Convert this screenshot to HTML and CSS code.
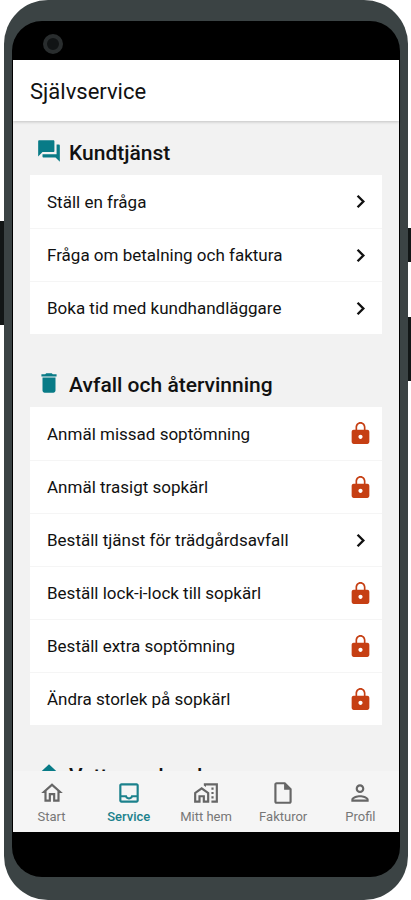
FILE: index.html
```html
<!DOCTYPE html>
<html lang="sv">
<head>
<meta charset="utf-8">
<meta name="viewport" content="width=device-width, initial-scale=1">
<title>Självservice</title>
<link rel="stylesheet" href="styles.css">
</head>
<body>
<svg class="defs" aria-hidden="true">
  <symbol id="chevron" viewBox="0 0 24 24"><path d="M9.200 6.500 14.700 12l-5.500 5.500" fill="none" stroke="currentColor" stroke-width="2.300"/></symbol>
  <symbol id="lock" viewBox="0 0 24 24"><path d="M18.500 8.500h-1.700V6c0-2.760-2.100-5-4.800-5S7.200 3.240 7.200 6v2.500H5.500c-1.100 0-2 .9-2 2V20c0 1.100.9 2 2 2h13c1.100 0 2-.9 2-2v-9.500c0-1.100-.9-2-2-2zM12 17.200c-1.100 0-2-.9-2-2s.9-2 2-2 2 .9 2 2-.9 2-2 2zm3.200-8.700H8.800V6c0-1.900 1.400-3.400 3.200-3.400s3.200 1.500 3.200 3.400v2.500z"/></symbol>
</svg>
<div class="phone">
  <span class="key key-left"></span>
  <span class="key key-power"></span>
  <span class="key key-volume"></span>
  <div class="bezel">
    <div class="camera-bar"><span class="camera"></span></div>
    <div class="screen">
      <header class="app-bar"><h1>Självservice</h1></header>
      <main class="content">
        <section class="group">
          <h2><svg viewBox="0 0 24 24" aria-hidden="true"><path d="M21 6h-2v9H6v2c0 .55.45 1 1 1h11l4 4V7c0-.55-.45-1-1-1zm-4 6V3c0-.55-.45-1-1-1H3c-.55 0-1 .45-1 1v14l4-4h10c.55 0 1-.45 1-1z"/></svg>Kundtjänst</h2>
          <ul class="card">
            <li><a href="#">Ställ en fråga<svg class="go"><use href="#chevron"/></svg></a></li>
            <li><a href="#">Fråga om betalning och faktura<svg class="go"><use href="#chevron"/></svg></a></li>
            <li><a href="#">Boka tid med kundhandläggare<svg class="go"><use href="#chevron"/></svg></a></li>
          </ul>
        </section>
        <section class="group">
          <h2><svg viewBox="0 0 24 24" aria-hidden="true"><path d="M6 19c0 1.100.9 2 2 2h8c1.100 0 2-.9 2-2V7H6v12zM19 4h-3.500l-1-1h-5l-1 1H5v2h14V4z"/></svg>Avfall och återvinning</h2>
          <ul class="card">
            <li><a href="#">Anmäl missad soptömning<svg class="lock"><use href="#lock"/></svg></a></li>
            <li><a href="#">Anmäl trasigt sopkärl<svg class="lock"><use href="#lock"/></svg></a></li>
            <li><a href="#">Beställ tjänst för trädgårdsavfall<svg class="go"><use href="#chevron"/></svg></a></li>
            <li><a href="#">Beställ lock-i-lock till sopkärl<svg class="lock"><use href="#lock"/></svg></a></li>
            <li><a href="#">Beställ extra soptömning<svg class="lock"><use href="#lock"/></svg></a></li>
            <li><a href="#">Ändra storlek på sopkärl<svg class="lock"><use href="#lock"/></svg></a></li>
          </ul>
        </section>
        <section class="group">
          <h2><svg viewBox="0 0 24 24" aria-hidden="true"><path d="M12 3 4 10.500h3V20h10v-9.500h3z"/></svg>Vatten och avlopp</h2>
        </section>
      </main>
      <nav class="tabs">
        <a href="#"><svg viewBox="0 0 24 24"><path d="m12 5.690 5 4.500V18h-2v-6H9v6H7v-7.810l5-4.500M12 3 2 12h3v8h6v-6h2v6h6v-8h3L12 3z"/></svg>Start</a>
        <a href="#" class="active" aria-current="page"><svg viewBox="0 0 24 24"><path d="M19 3H5c-1.100 0-2 .9-2 2v14c0 1.100.9 2 2 2h14c1.100 0 2-.9 2-2V5c0-1.100-.9-2-2-2zm0 16H5v-3h3.560c.69 1.190 1.970 2 3.450 2s2.750-.81 3.450-2H19v3zm0-5h-4.990c0 1.100-.9 2-2 2s-2-.9-2-2H5V5h14v9z"/></svg>Service</a>
        <a href="#"><svg viewBox="0 0 24 24"><path d="M1 11.500V21h6v-5h2v5h6v-9.500L8 6.500l-7 5zM13 19h-2v-5H5v5H3v-6.460l5-3.570 5 3.570V19z"/><path d="M17 7h2v2h-2zM17 11h2v2h-2zM17 15h2v2h-2z"/><path d="M10 3v1.970l2 1.430V5h9v14h-4v2h6V3z"/></svg>Mitt hem</a>
        <a href="#"><svg viewBox="0 0 24 24"><path d="M14 2H6c-1.100 0-2 .9-2 2v16c0 1.100.9 2 2 2h12c1.100 0 2-.9 2-2V8l-6-6zM6 20V4h7v5h5v11H6z"/></svg>Fakturor</a>
        <a href="#"><svg viewBox="0 0 24 24"><path d="M12 6c1.100 0 2 .9 2 2s-.9 2-2 2-2-.9-2-2 .9-2 2-2m0 10c2.700 0 5.800 1.290 6 2H6c.23-.72 3.310-2 6-2m0-12C9.790 4 8 5.790 8 8s1.790 4 4 4 4-1.790 4-4-1.790-4-4-4zm0 10c-2.670 0-8 1.340-8 4v2h16v-2c0-2.660-5.330-4-8-4z"/></svg>Profil</a>
      </nav>
    </div>
  </div>
</div>
</body>
</html>
```
FILE: styles.css
```css
* { box-sizing: border-box; }

body {
  margin: 0;
  background: #fff;
  color: #111;
  font-family: Roboto, "Liberation Sans", sans-serif;
}

h1, h2, ul { margin: 0; padding: 0; }
a { color: inherit; text-decoration: none; }
svg { fill: currentColor; flex: none; }
.defs { display: none; }

.phone {
  position: relative;
  height: 100vh;
  margin: 0 3px 0 4px;
  padding: 21px 8px 23px;
  border-radius: 44px;
  background: #3b4344;
}

.key {
  position: absolute;
  width: 4px;
  background: #121616;
}
.key-left { left: -4px; top: 221px; height: 104px; }
.key-power { right: -4px; top: 228px; height: 34px; }
.key-volume { right: -4px; top: 317px; height: 64px; }

.bezel {
  display: flex;
  flex-direction: column;
  height: 100%;
  padding: 0 1px 45px;
  border-radius: 30px;
  background: #000;
}

.camera-bar {
  display: flex;
  align-items: center;
  height: 39px;
  padding: 6px 30px 0;
}
.camera {
  width: 20px;
  height: 20px;
  border: 4px solid #292d2e;
  border-radius: 50%;
  background: #111415;
}

.screen {
  display: flex;
  flex: 1;
  flex-direction: column;
  min-height: 0;
  background: #f2f2f2;
}

.app-bar {
  z-index: 1;
  padding: 17px 17px 14px;
  background: #fff;
  box-shadow: 0 1px 3px rgba(0, 0, 0, 0.2);
}
h1 {
  font-size: 22px;
  font-weight: 400;
  line-height: 30px;
}

.content {
  flex: 1;
  min-height: 0;
  padding: 16px 17px 0;
  overflow: hidden;
}
.group { margin-bottom: 35px; }
h2 {
  display: flex;
  align-items: center;
  gap: 7px;
  height: 38px;
  padding: 0 6px 6px;
  font-size: 21px;
  font-weight: 500;
  line-height: 32px;
}
h2 svg {
  width: 26px;
  height: 26px;
  margin-bottom: 4px;
  color: #087b87;
}

.card {
  list-style: none;
  background: #fff;
}
.card a {
  display: flex;
  align-items: center;
  justify-content: space-between;
  height: 53px;
  padding: 0 9px 0 17px;
  font-size: 17px;
}
.card li + li a { border-top: 1px solid #f5f5f5; }
.card svg { width: 25px; height: 25px; }
.lock { color: #c63f13; }

.tabs {
  display: grid;
  grid-template-columns: repeat(5, 1fr);
  height: 61px;
  background: #f5f5f5;
  color: #777;
}
.tabs a {
  display: flex;
  flex-direction: column;
  align-items: center;
  padding-top: 9px;
  font-size: 13px;
  line-height: 20px;
  white-space: nowrap;
}
.tabs svg { width: 26px; height: 26px; margin-bottom: 1px; color: #666; }
.tabs .active, .tabs .active svg { color: #1b818c; }
.tabs .active { font-weight: 500; }
```
